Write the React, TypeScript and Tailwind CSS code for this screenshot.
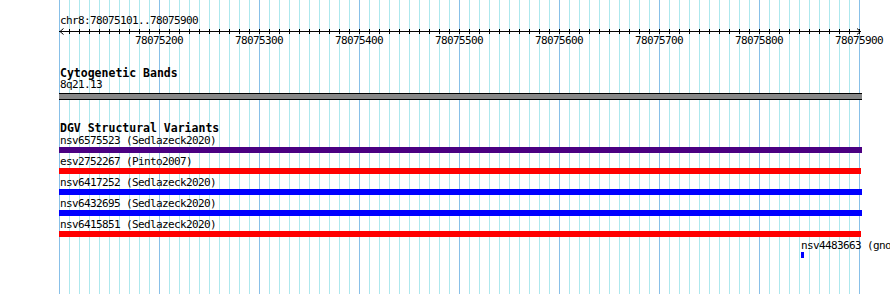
const GRID_X = Array.from({ length: 81 }, (_, i) => 59 + i * 10);
const LABELS = ['78075200', '78075300', '78075400', '78075500', '78075600', '78075700', '78075800', '78075900'];

const VARIANTS = [
  { name: 'nsv6575523 (Sedlazeck2020)', color: 'bg-[#4b0082]', w: 'w-[803px]' },
  { name: 'esv2752267 (Pinto2007)', color: 'bg-[#ff0000]', w: 'w-[802px]' },
  { name: 'nsv6417252 (Sedlazeck2020)', color: 'bg-[#0000ff]', w: 'w-[803px]' },
  { name: 'nsv6432695 (Sedlazeck2020)', color: 'bg-[#0000ff]', w: 'w-[803px]' },
  { name: 'nsv6415851 (Sedlazeck2020)', color: 'bg-[#ff0000]', w: 'w-[802px]' },
];

// background grid: one line every 10bp, darker every 100bp
function Grid() {
  return (
    <div className="absolute inset-0 flex pl-[59px] gap-[9px]">
      {GRID_X.map((x, i) => (
        <div key={x} className={`w-px h-full shrink-0 ${i % 10 === 0 ? 'bg-[#88c0e8]' : 'bg-[#aee8ee]'}`} />
      ))}
    </div>
  );
}

function Ruler() {
  return (
    <svg width={890} height={10} className="block shrink-0">
      <line x1={59} x2={861} y1={5.5} y2={5.5} stroke="#000" strokeWidth={1} shapeRendering="crispEdges" />
      {GRID_X.slice(1).map((x) => (
        <line key={x} x1={x + 0.5} x2={x + 0.5} y1={3} y2={8} stroke="#000" strokeWidth={1} shapeRendering="crispEdges" />
      ))}
      <polyline points="63.5,2.5 60,5.5 63.5,8.5" fill="none" stroke="#000" strokeWidth={1} />
      <polyline points="857,2.5 860.5,5.5 857,8.5" fill="none" stroke="#000" strokeWidth={1} />
    </svg>
  );
}

function Title({ children, className = '' }: { children: React.ReactNode; className?: string }) {
  return (
    <div className={`pl-[60px] h-[13px] text-[11.5px] leading-[12px] font-bold whitespace-nowrap ${className}`}>
      {children}
    </div>
  );
}

export default function App() {
  return (
    <div
      className="relative w-[890px] h-[294px] overflow-hidden bg-white text-black"
      style={{ fontFamily: '"DejaVu Sans Mono", "Liberation Mono", monospace' }}
    >
      <Grid />
      <div className="relative flex flex-col text-[11px] tracking-[-0.62px] leading-[10px]">
        <div className="mt-[16px] h-[10px] pl-[60px] whitespace-nowrap">chr8:78075101..78075900</div>
        <Ruler />
        <div className="flex h-[10px] pl-[109px] shrink-0">
          {LABELS.map((l) => (
            <div key={l} className="w-[100px] shrink-0 text-center">{l}</div>
          ))}
        </div>

        <Title className="mt-[21px] tracking-normal">Cytogenetic Bands</Title>
        <div className="h-[10px] pl-[60px]">8q21.13</div>
        <div className="ml-[59px] mt-[3px] w-[803px] h-[7px] bg-[#888888] border-y border-black" />

        <Title className="mt-[22px] tracking-normal">DGV Structural Variants</Title>
        <div className="flex flex-col mt-[1px]">
          {VARIANTS.map((v) => (
            <div key={v.name} className="h-[21px]">
              <div className="h-[10px] pl-[60px] whitespace-nowrap">{v.name}</div>
              <div className={`ml-[59px] mt-[1px] h-[6px] ${v.w} ${v.color}`} />
            </div>
          ))}
          <div className="h-[21px]">
            <div className="h-[10px] pl-[801px] whitespace-nowrap">nsv4483663 (gno</div>
            <div className="ml-[801px] mt-[1px] h-[6px] w-[3px] bg-[#0000ff]" />
          </div>
        </div>
      </div>
    </div>
  );
}
